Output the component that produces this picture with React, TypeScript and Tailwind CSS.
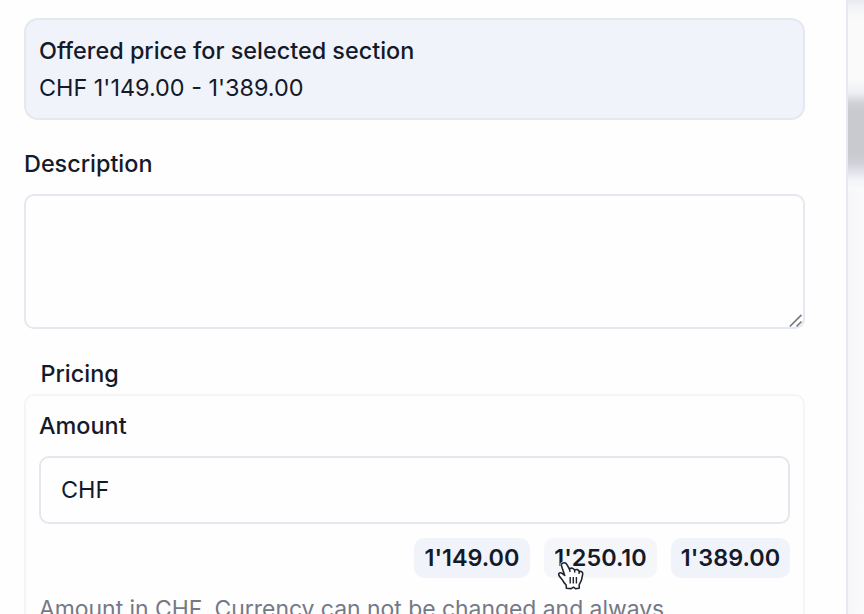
function PriceOption({ children, className }: { children: string; className: string }) {
  return (
    <button type="button" className={`flex h-10 shrink-0 items-center justify-center rounded-[10px] font-semibold ${className}`}>
      {children}
    </button>
  );
}

function ResizeGrip() {
  return (
    <svg className="absolute bottom-[1px] right-[2px] h-[14px] w-[14px]" viewBox="0 0 14 14" fill="none" stroke="#747986" strokeWidth="1.7" strokeLinecap="round">
      <path d="M1.3 12 12 1.3M8 12 12 8" />
    </svg>
  );
}

function HandCursor() {
  return (
    <svg className="pointer-events-none absolute left-[13px] top-[23px] h-[30px] w-[28px]" viewBox="0 0 28 30" fill="none">
      <path d="M6.1 2C4.5 2.5 4.1 3.8 4.6 5.3L7.7 14.4 5.1 12.3C3.4 11.1 1 12.2 1.8 14.1 2.7 16.4 5.4 18.2 6.4 20.7 7.3 22.6 9.3 23.3 9.3 25V27.3L14.2 27.6 16.4 26.2 18.4 27.6 22.2 27.2V24.2C22.5 22 24.3 20.7 24.7 18.2L25.7 13.2C26.1 11 24.3 9.8 22.3 10.7 21.6 8.4 19.4 8 17.5 9 16.6 7 14.3 6.6 12.4 8L10.1 3.8C9.2 2.1 7.8 1.4 6.1 2Z" fill="white" stroke="#fff" strokeWidth="3" strokeOpacity="0.7" strokeLinejoin="round" />
      <path d="M6.1 2C4.5 2.5 4.1 3.8 4.6 5.3L7.7 14.4 5.1 12.3C3.4 11.1 1 12.2 1.8 14.1 2.7 16.4 5.4 18.2 6.4 20.7 7.3 22.6 9.3 23.3 9.3 25V27.3L14.2 27.6 16.4 26.2 18.4 27.6 22.2 27.2V24.2C22.5 22 24.3 20.7 24.7 18.2L25.7 13.2C26.1 11 24.3 9.8 22.3 10.7 21.6 8.4 19.4 8 17.5 9 16.6 7 14.3 6.6 12.4 8L10.1 3.8C9.2 2.1 7.8 1.4 6.1 2Z" fill="white" stroke="#20242f" strokeWidth="1.6" strokeLinejoin="round" />
      <path d="M12.4 8 13.1 11M17.5 9 17.9 11.7M22.3 10.7 22 13M13.2 16V22.5M16.3 16V22.5M19.4 16V22.5" stroke="#20242f" strokeWidth="1.4" />
    </svg>
  );
}

export default function App() {
  return (
    <div className="flex h-[614px] w-[864px] overflow-hidden bg-[#fefefe] font-['Inter',sans-serif] text-[23.4px] font-medium leading-8 text-[#151a29]">
      <main className="flex w-[846px] shrink-0 flex-col pl-6 pt-[18px]">
        <section className="h-[102px] w-[781px] shrink-0 rounded-[14px] border-2 border-[#e4e8ef] bg-[#f0f4fa] px-[13px] pt-[15px]">
          <h2>Offered price for selected section</h2>
          <p className="mt-[5px] font-normal">CHF 1'149.00 - 1'389.00</p>
        </section>
        <label htmlFor="description" className="mt-[28px] h-8 w-fit">Description</label>
        <div className="relative mt-[14px] h-[135px] w-[781px] shrink-0">
          <textarea id="description" className="block h-full w-full resize-none rounded-[10px] border-2 border-[#e5e8ee] bg-[#fefefe] outline-none" />
          <ResizeGrip />
        </div>
        <h3 className="ml-[16.5px] mt-[29px]">Pricing</h3>
        <section className="mt-[4px] flex h-[300px] w-[781px] shrink-0 flex-col rounded-[10px] border-2 border-[#f5f5f7] px-[13px] pt-[14px]">
          <label className="h-8 w-fit">Amount</label>
          <div className="mt-[14px] flex h-[68px] w-[751px] shrink-0 items-center rounded-[10px] border-2 border-[#e5e7ee] bg-[#fefefe] pl-[20px] font-normal">CHF</div>
          <div className="mt-[14px] flex h-10 justify-end gap-[14px]">
            <PriceOption className="w-[116px] bg-[#f0f4fa]">1'149.00</PriceOption>
            <div className="relative">
              <PriceOption className="w-[113px] bg-[#f4f6f9]">1'250.10</PriceOption>
              <HandCursor />
            </div>
            <PriceOption className="w-[119px] bg-[#f0f4fa]">1'389.00</PriceOption>
          </div>
          <p className="mt-[15px] whitespace-nowrap text-[22.9px] font-normal text-[#747986]">Amount in CHF. Currency can not be changed and always</p>
        </section>
      </main>
      <aside className="flex w-[18px] flex-col border-l-2 border-[#e6e9f1] bg-[#f9f9fb]">
        <div className="h-[190px] shrink-0 bg-[linear-gradient(180deg,#e8eaf0_0px,#f3f4f7_8px,#fafafb_20px,#fafafb_80px,#eceef3_93px,#d0d1d6_103px,#c9cacf_111px,#c9cacf_153px,#d0d1d7_163px,#e4e6ee_173px,#f3f4f8_180px,#fafafb_190px)]" />
        <div className="w-full flex-1 bg-[linear-gradient(90deg,#f5f6fa_0px,#f8f8fb_6px,#fafafb_16px)]" />
      </aside>
    </div>
  );
}
